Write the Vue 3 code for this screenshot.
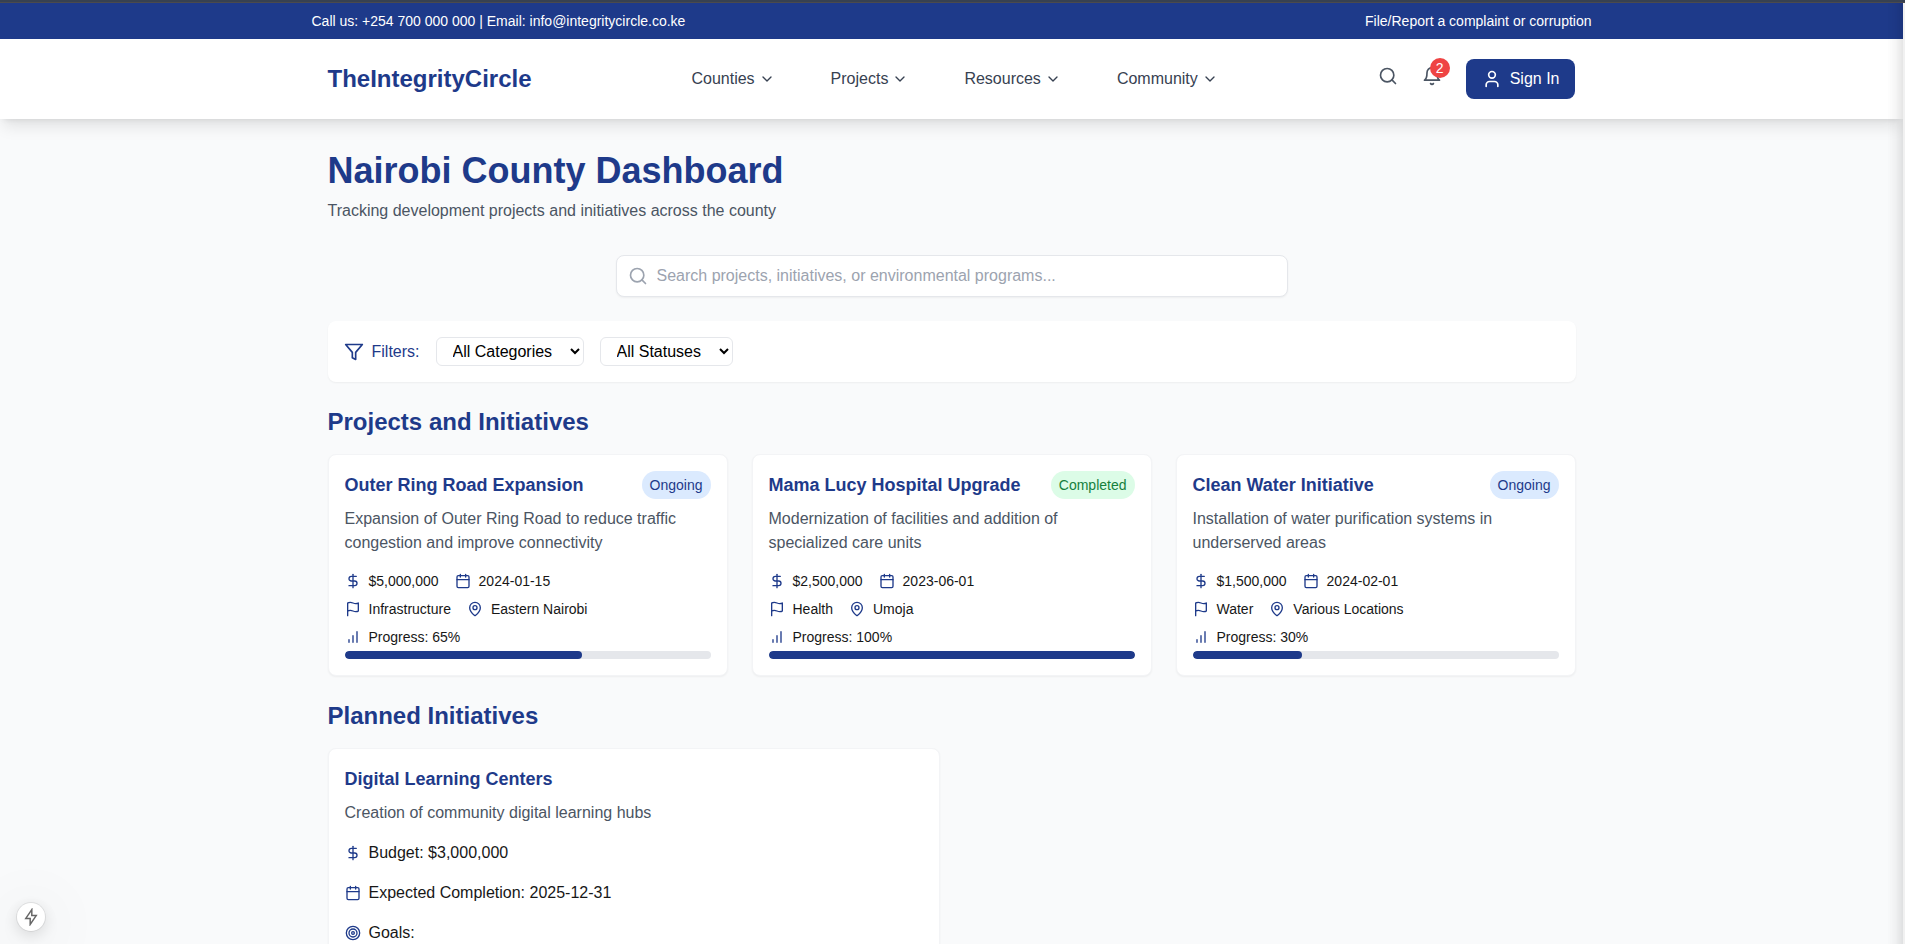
<script setup>
import { ref, h } from 'vue'

const shapes = {
  chevron: [['path', { d: 'm6 9 6 6 6-6' }]],
  search: [['circle', { cx: 11, cy: 11, r: 8 }], ['path', { d: 'm21 21-4.3-4.3' }]],
  bell: [
    ['path', { d: 'M6 8a6 6 0 0 1 12 0c0 7 3 9 3 9H3s3-2 3-9' }],
    ['path', { d: 'M10.3 21a1.94 1.94 0 0 0 3.4 0' }],
  ],
  user: [['path', { d: 'M19 21v-2a4 4 0 0 0-4-4H9a4 4 0 0 0-4 4v2' }], ['circle', { cx: 12, cy: 7, r: 4 }]],
  filter: [['polygon', { points: '22 3 2 3 10 12.46 10 19 14 21 14 12.46 22 3' }]],
  dollar: [
    ['path', { d: 'M12 2v20' }],
    ['path', { d: 'M17 5H9.5a3.5 3.5 0 0 0 0 7h5a3.5 3.5 0 0 1 0 7H6' }],
  ],
  calendar: [
    ['path', { d: 'M8 2v4M16 2v4M3 10h18' }],
    ['rect', { x: 3, y: 4, width: 18, height: 18, rx: 2 }],
  ],
  flag: [['path', { d: 'M4 15s1-1 4-1 5 2 8 2 4-1 4-1V3s-1 1-4 1-5-2-8-2-4 1-4 1zM4 22v-7' }]],
  pin: [
    ['path', { d: 'M20 10c0 4.993-5.539 10.193-7.399 11.799a1 1 0 0 1-1.202 0C9.539 20.193 4 14.993 4 10a8 8 0 0 1 16 0' }],
    ['circle', { cx: 12, cy: 10, r: 3 }],
  ],
  bars: [['path', { d: 'M12 20V10M18 20V4M6 20v-4' }]],
  target: [
    ['circle', { cx: 12, cy: 12, r: 10 }],
    ['circle', { cx: 12, cy: 12, r: 6 }],
    ['circle', { cx: 12, cy: 12, r: 2 }],
  ],
}

const Icon = (props) =>
  h(
    'svg',
    {
      width: props.size,
      height: props.size,
      viewBox: '0 0 24 24',
      fill: 'none',
      stroke: 'currentColor',
      'stroke-width': 2,
      'stroke-linecap': 'round',
      'stroke-linejoin': 'round',
      'aria-hidden': 'true',
    },
    shapes[props.name].map(([tag, attrs]) => h(tag, attrs)),
  )
Icon.props = ['name', 'size']

const menu = ['Counties', 'Projects', 'Resources', 'Community']
const query = ref('')
const category = ref('All Categories')
const status = ref('All Statuses')

const projects = [
  {
    title: 'Outer Ring Road Expansion',
    status: 'Ongoing',
    text: 'Expansion of Outer Ring Road to reduce traffic congestion and improve connectivity',
    budget: '$5,000,000',
    date: '2024-01-15',
    category: 'Infrastructure',
    place: 'Eastern Nairobi',
    progress: 65,
  },
  {
    title: 'Mama Lucy Hospital Upgrade',
    status: 'Completed',
    text: 'Modernization of facilities and addition of specialized care units',
    budget: '$2,500,000',
    date: '2023-06-01',
    category: 'Health',
    place: 'Umoja',
    progress: 100,
  },
  {
    title: 'Clean Water Initiative',
    status: 'Ongoing',
    text: 'Installation of water purification systems in underserved areas',
    budget: '$1,500,000',
    date: '2024-02-01',
    category: 'Water',
    place: 'Various Locations',
    progress: 30,
  },
]
</script>

<template>
  <div class="window">
    <div class="frame-top"></div>
    <div class="viewport">
      <div class="page">
        <div class="topbar">
          <div class="topbar-inner">
            <span>Call us: +254 700 000 000 | Email: info@integritycircle.co.ke</span>
            <a href="#report">File/Report a complaint or corruption</a>
          </div>
        </div>

        <header class="header">
          <div class="header-inner">
            <a class="brand" href="#home">TheIntegrityCircle</a>
            <nav class="nav">
              <button v-for="item in menu" :key="item" type="button" class="nav-item">
                {{ item }}<Icon name="chevron" :size="16" />
              </button>
            </nav>
            <div class="actions">
              <button type="button" class="icon-button" aria-label="Search">
                <Icon name="search" :size="20" />
              </button>
              <button type="button" class="icon-button" aria-label="Notifications">
                <Icon name="bell" :size="20" />
                <span class="count">2</span>
              </button>
              <button type="button" class="sign-in"><Icon name="user" :size="20" />Sign In</button>
            </div>
          </div>
        </header>

        <main class="main">
          <h1>Nairobi County Dashboard</h1>
          <p class="subtitle">Tracking development projects and initiatives across the county</p>

          <div class="search">
            <Icon name="search" :size="20" />
            <input
              v-model="query"
              type="text"
              aria-label="Search projects"
              placeholder="Search projects, initiatives, or environmental programs..."
            />
          </div>

          <div class="filters">
            <div class="filters-label"><Icon name="filter" :size="20" />Filters:</div>
            <select v-model="category" aria-label="Category">
              <option>All Categories</option>
              <option>Infrastructure</option>
              <option>Health</option>
              <option>Water</option>
            </select>
            <select v-model="status" aria-label="Status">
              <option>All Statuses</option>
              <option>Ongoing</option>
              <option>Completed</option>
            </select>
          </div>

          <section>
            <h2>Projects and Initiatives</h2>
            <div class="grid three">
              <article v-for="p in projects" :key="p.title" class="card">
                <div class="card-head">
                  <h3>{{ p.title }}</h3>
                  <span class="badge" :class="p.status.toLowerCase()">{{ p.status }}</span>
                </div>
                <p class="card-text">{{ p.text }}</p>
                <div class="meta">
                  <div class="row">
                    <span class="fact"><Icon name="dollar" :size="16" />{{ p.budget }}</span>
                    <span class="fact"><Icon name="calendar" :size="16" />{{ p.date }}</span>
                  </div>
                  <div class="row">
                    <span class="fact"><Icon name="flag" :size="16" />{{ p.category }}</span>
                    <span class="fact"><Icon name="pin" :size="16" />{{ p.place }}</span>
                  </div>
                  <div class="row">
                    <span class="fact"><Icon name="bars" :size="16" />Progress: {{ p.progress }}%</span>
                  </div>
                </div>
                <div class="track"><div class="fill" :style="{ width: p.progress + '%' }"></div></div>
              </article>
            </div>
          </section>

          <section>
            <h2>Planned Initiatives</h2>
            <div class="grid two">
              <article class="card">
                <h3>Digital Learning Centers</h3>
                <p class="card-text">Creation of community digital learning hubs</p>
                <div class="plan">
                  <span class="fact"><Icon name="dollar" :size="16" />Budget: $3,000,000</span>
                  <span class="fact"><Icon name="calendar" :size="16" />Expected Completion: 2025-12-31</span>
                  <span class="fact"><Icon name="target" :size="16" />Goals:</span>
                </div>
              </article>
            </div>
          </section>
        </main>
      </div>
      <div class="edge"></div>
    </div>

    <button type="button" class="bolt" aria-label="Developer tools">
      <svg width="16" height="18" viewBox="0 0 16 18" fill="none" stroke="#666" stroke-width="1.5" aria-hidden="true">
        <path d="M8.8 1.6 2.8 10.4H7.2V16.4L13.2 7.6H8.8Z" />
      </svg>
    </button>
  </div>
</template>

<style>
body {
  margin: 0;
  background: #f9fafb;
}
</style>

<style scoped>
* {
  box-sizing: border-box;
}
h1, h2, h3, p {
  margin: 0;
}
button, input, select {
  font: inherit;
  margin: 0;
}
button {
  border: 0;
  padding: 0;
  background: none;
  cursor: pointer;
}
a {
  color: inherit;
  text-decoration: none;
}
svg {
  display: block;
  flex-shrink: 0;
}
.window {
  display: flex;
  flex-direction: column;
  height: 100vh;
  font-family: "Liberation Sans", Arial, sans-serif;
  font-size: 16px;
  line-height: 24px;
  color: #171717;
}
.frame-top {
  height: 3px;
  flex-shrink: 0;
  background: #374151;
  border-bottom: 1px solid #4b4a4d;
}
.viewport {
  flex: 1;
  min-height: 0;
  display: flex;
  overflow: hidden;
}
.page {
  flex: 1;
  min-width: 0;
  overflow-y: auto;
  scrollbar-width: none;
  background: #f9fafb;
}
.edge {
  position: relative;
  width: 2px;
  background: #f1f1f1;
}
.edge::before {
  content: "";
  position: absolute;
  top: 0;
  right: 100%;
  width: 16px;
  height: 100%;
  background: linear-gradient(to left, rgba(0, 0, 0, 0.1), rgba(0, 0, 0, 0.03) 50%, transparent);
  pointer-events: none;
}
.topbar {
  background: #1e3a8a;
  color: #fff;
  font-size: 14px;
  line-height: 20px;
  padding: 8px 0;
}
.topbar-inner {
  max-width: 1280px;
  margin: 0 auto;
  display: flex;
  justify-content: space-between;
}
.header {
  position: relative;
  background: #fff;
  box-shadow: 0 10px 15px -3px rgba(0, 0, 0, 0.1), 0 4px 6px -4px rgba(0, 0, 0, 0.1);
}
.header-inner {
  max-width: 1280px;
  margin: 0 auto;
  padding: 20px 16px;
  display: flex;
  align-items: center;
  justify-content: space-between;
}
.brand {
  font-size: 24px;
  line-height: 32px;
  font-weight: 700;
  color: #1e3a8a;
}
.nav {
  display: flex;
  gap: 32px;
}
.nav-item {
  display: flex;
  align-items: center;
  gap: 4px;
  padding: 8px 12px;
  color: #374151;
}
.actions {
  display: flex;
  align-items: center;
  gap: 24px;
}
.icon-button {
  position: relative;
  padding-bottom: 6px;
  color: #4b5563;
}
.count {
  position: absolute;
  top: -8px;
  right: -8px;
  width: 20px;
  height: 20px;
  border-radius: 50%;
  background: #ef4444;
  color: #fff;
  font-size: 14px;
  line-height: 20px;
  text-align: center;
}
.sign-in {
  display: flex;
  align-items: center;
  gap: 8px;
  padding: 8px 16px;
  border-radius: 8px;
  background: #1e3a8a;
  color: #fff;
}
.main {
  max-width: 1280px;
  margin: 0 auto;
  padding: 32px 16px;
}
h1 {
  font-size: 36px;
  line-height: 40px;
  font-weight: 700;
  color: #1e3a8a;
}
.subtitle {
  margin-top: 8px;
  color: #4b5563;
}
.search {
  max-width: 672px;
  margin: 32px auto 24px;
  display: flex;
  align-items: center;
  gap: 9px;
  padding: 0 11px;
  border: 1px solid #e5e7eb;
  border-radius: 8px;
  background: #fff;
  box-shadow: 0 1px 2px rgba(0, 0, 0, 0.05);
  color: #9ca3af;
}
.search input {
  flex: 1;
  min-width: 0;
  height: 40px;
  padding: 0;
  border: 0;
  outline: 0;
  background: transparent;
  color: #171717;
}
.search input::placeholder {
  color: #9ca3af;
}
.filters {
  display: flex;
  align-items: center;
  gap: 16px;
  padding: 16px;
  border-radius: 8px;
  background: #fff;
  box-shadow: 0 1px 2px rgba(0, 0, 0, 0.05);
}
.filters-label {
  display: flex;
  align-items: center;
  gap: 8px;
  color: #1e3a8a;
}
select {
  padding: 4px 14px 4px 12px;
  border: 1px solid #e5e7eb;
  border-radius: 6px;
  background: #fff;
  color: #000;
}
section {
  margin-top: 24px;
}
h2 {
  margin-bottom: 16px;
  font-size: 24px;
  line-height: 32px;
  font-weight: 700;
  color: #1e3a8a;
}
.grid {
  display: grid;
  gap: 24px;
}
.three {
  grid-template-columns: repeat(3, minmax(0, 1fr));
}
.two {
  grid-template-columns: repeat(2, minmax(0, 1fr));
}
.card {
  padding: 16px;
  border: 1px solid #f3f4f6;
  border-radius: 8px;
  background: #fff;
  box-shadow: 0 1px 2px rgba(0, 0, 0, 0.05);
}
.card-head {
  display: flex;
  align-items: center;
  justify-content: space-between;
}
h3 {
  font-size: 18px;
  line-height: 28px;
  font-weight: 700;
  color: #1e3a8a;
}
.badge {
  padding: 4px 8px;
  border-radius: 14px;
  font-size: 14px;
  line-height: 20px;
}
.ongoing {
  background: #dbeafe;
  color: #1e3a8a;
}
.completed {
  background: #dcfce7;
  color: #15803d;
}
.card-text {
  margin: 8px 0 16px;
  color: #4b5563;
}
.meta {
  display: flex;
  flex-direction: column;
  gap: 8px;
  font-size: 14px;
  line-height: 20px;
}
.row {
  display: flex;
  gap: 16px;
}
.fact {
  display: flex;
  align-items: center;
  gap: 8px;
}
.fact svg {
  color: #1e3a8a;
}
.track {
  margin-top: 4px;
  height: 8px;
  border-radius: 4px;
  background: #e5e7eb;
  overflow: hidden;
}
.fill {
  height: 100%;
  border-radius: 4px;
  background: #1e3a8a;
}
.plan {
  display: flex;
  flex-direction: column;
  gap: 16px;
}
.bolt {
  position: fixed;
  left: 17px;
  bottom: 13px;
  width: 28px;
  height: 28px;
  display: flex;
  align-items: center;
  justify-content: center;
  border-radius: 50%;
  background: #fff;
  box-shadow: 0 0 0 1px rgba(0, 0, 0, 0.08), 0 4px 16px rgba(0, 0, 0, 0.14), 0 8px 64px rgba(0, 0, 0, 0.16);
}
</style>
